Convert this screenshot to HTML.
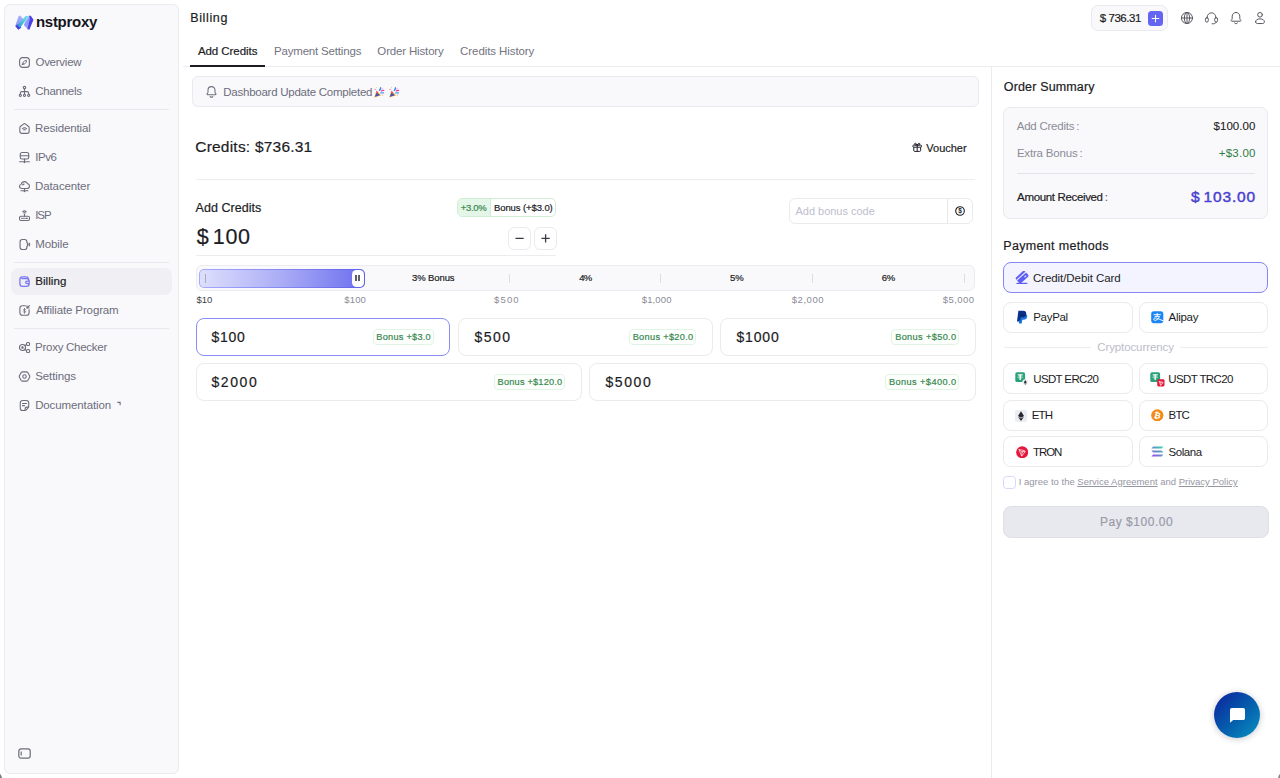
<!DOCTYPE html>
<html lang="en">
<head>
<meta charset="utf-8">
<title>Billing - Nstproxy</title>
<style>
*{box-sizing:border-box;margin:0;padding:0}
html,body{width:1280px;height:778px;overflow:hidden;background:#fff}
body{font-family:"Liberation Sans",sans-serif;color:#1c1c24;position:relative;font-size:12px}
.abs{position:absolute}
.t{position:absolute;white-space:nowrap;line-height:1}
.m{-webkit-text-stroke:0.2px currentColor}
/* sidebar */
#side{position:absolute;left:4px;top:4px;width:175px;height:770px;background:#f9f9fb;border:1px solid #eaeaef;border-radius:6px}
.nav{position:absolute;left:35px;font-size:11.5px;letter-spacing:-0.15px;color:#6d6d7c;white-space:nowrap;line-height:14px}
.nav.act{color:#1c1c24}
.ico{position:absolute;left:17.900px;width:13px;height:13px}
.ico svg{display:block;width:13px;height:13px;fill:none;stroke:#6d6d7c;stroke-width:2.050;stroke-linecap:round;stroke-linejoin:round}
.sdiv{position:absolute;left:14px;width:155px;height:1px;background:#e7e7ec}
/* main */
.hline{position:absolute;height:1px;background:#ededf1}
.box{position:absolute;border:1px solid #eaeaef;border-radius:8px;background:#fff}
.bbox{position:absolute;border:1px solid #e2f4e5;border-radius:4px;height:16px;background:#fdfffd}
.btx{font-size:9.200px;line-height:12px;color:#37874f;-webkit-text-stroke:0.2px #37874f}
.amt{position:absolute;font-size:15px;line-height:18px;color:#1c1c24;white-space:nowrap}
.pm{position:absolute;border:1px solid #eaeaef;border-radius:8px;background:#fff;height:31px}
.pm span{position:absolute;left:29px;top:8px;font-size:11.500px;line-height:14px;color:#1c1c24;white-space:nowrap}
.pm svg{position:absolute;left:11px;top:8px;width:13px;height:13px}
</style>
</head>
<body>

<!-- ============ SIDEBAR ============ -->
<div id="side"></div>

<!-- logo -->
<svg class="abs" style="left:15px;top:15.300px" width="19" height="16" viewBox="0 0 19 16">
  <defs>
    <linearGradient id="lg1" x1="1" y1="0" x2="0" y2="1"><stop offset="0" stop-color="#86e6ea"/><stop offset="0.55" stop-color="#4cc3df"/><stop offset="1" stop-color="#2b86d6"/></linearGradient>
    <linearGradient id="lg2" x1="0" y1="0" x2="0" y2="1"><stop offset="0" stop-color="#a9b3fb"/><stop offset="1" stop-color="#7f8df6"/></linearGradient>
  </defs>
  <path d="M3.600 1L5.200 .6L8.600 4.600L3.400 14.600L.3 11z" fill="url(#lg2)"/>
  <path d="M.3 11L3.400 14.700L6.400 12.600L2.800 9.300z" fill="#3f3ce0"/>
  <path d="M10.600 .9L14.400 .7L5 12.700L2.200 10.400z" fill="url(#lg1)"/>
  <path d="M10.600 6.200L14.200 1.200L14.900 3.600L12.900 14.300L8.800 9.900z" fill="#8f9cff"/>
  <path d="M14 .8L15.800 .8L18.500 4.800L14.300 14.700L12.500 14.200L14.700 3.800z" fill="#4b41e8"/>
</svg>
<div class="t" id="logo" style="left:36.00px;top:13px;font-size:15px;font-weight:bold;color:#15151c;letter-spacing:-0.293px;line-height:18px">nstproxy</div>

<!-- nav -->
<div class="ico" style="top:55.8px"><svg viewBox="0 0 24 24"><rect x="3" y="3" width="18" height="18" rx="5.500"/><path d="M8.200 15.800c-.6-3.800 3.600-8 7.600-7.600c.4 4-3.800 8.200-7.600 7.600z" stroke-width="1.700"/><path d="M7.400 16.600l3-3" stroke-width="1.500"/></svg></div>
<div id="n-overview" class="nav" style="top:55px;letter-spacing:-0.256px;left:35.44px">Overview</div>
<div class="ico" style="top:84.8px"><svg viewBox="0 0 24 24"><circle cx="12" cy="4.800" r="2.300"/><path d="M12 7.200v9M4.300 16.500v-1.500c0-1.800 1-2.800 2.800-2.800h9.800c1.800 0 2.800 1 2.800 2.800v1.500"/><circle cx="4.300" cy="19" r="2"/><circle cx="12" cy="19" r="2"/><circle cx="19.700" cy="19" r="2"/></svg></div>
<div id="n-channels" class="nav" style="top:84px;letter-spacing:-0.285px;left:35.34px">Channels</div>
<div class="ico" style="top:121.8px"><svg viewBox="0 0 24 24"><path d="M10.600 3.500c.9-.7 1.900-.7 2.800 0l6.200 4.700c.7.500 1 1.200 1 2v6.800c0 2.500-1.500 4-4 4H7.400c-2.500 0-4-1.500-4-4v-6.800c0-.8.300-1.500 1-2z"/><path d="M8.300 12.300c2.200-2 5.200-2 7.400 0M10.400 14.600c1-.8 2.200-.8 3.200 0"/></svg></div>
<div id="n-residential" class="nav" style="top:121px;letter-spacing:-0.116px;left:35.12px">Residential</div>
<div class="ico" style="top:150.8px"><svg viewBox="0 0 24 24"><rect x="4.200" y="2.800" width="15.600" height="12" rx="3.200"/><path d="M4.200 8.800h15.600M12 14.800v4M3 19.800h18M10.300 19.800l1.700 1.700l1.700-1.700"/></svg></div>
<div id="n-ipv6" class="nav" style="top:150px;letter-spacing:-0.383px;left:35.14px">IPv6</div>
<div class="ico" style="top:179.8px"><svg viewBox="0 0 24 24"><path d="M7.300 15.800c-2.600 0-4.500-1.800-4.500-4.100c0-2 1.400-3.600 3.300-4C6.800 4.900 9.100 3 11.900 3c2.500 0 4.600 1.500 5.500 3.700c2.200.3 3.800 2.100 3.800 4.400c0 2.600-2 4.700-4.600 4.700z"/><path d="M8.500 9.200c.5-1 1.500-1.600 2.700-1.600M12 15.800v3.700M5.500 19.800h13M10.300 19.800l1.700 1.700l1.700-1.700"/></svg></div>
<div id="n-datacenter" class="nav" style="top:179px;letter-spacing:-0.128px;left:35.12px">Datacenter</div>
<div class="ico" style="top:208.8px"><svg viewBox="0 0 24 24"><rect x="2.800" y="13.500" width="18.400" height="7.700" rx="2.600"/><path d="M12 13.500V9.200M6.800 17.400h1M10.500 17.400h1M14.300 17.400h3"/><path d="M8.800 5c1.900-1.700 4.500-1.700 6.400 0M10.500 7.200c.9-.8 2.100-.8 3 0"/></svg></div>
<div id="n-isp" class="nav" style="top:208px;letter-spacing:-0.965px;left:35.14px">ISP</div>
<div class="ico" style="top:237.8px"><svg viewBox="0 0 24 24"><path d="M16.500 8.500V7c0-2.800-1.400-4.200-4.200-4.200H8c-2.800 0-4.200 1.400-4.200 4.200v10c0 2.800 1.400 4.200 4.200 4.200h4.300c2.800 0 4.200-1.400 4.200-4.200v-1.500"/><path d="M16.500 8.500c1.600.5 2.700 1.800 2.700 3.500s-1.100 3-2.700 3.500" fill="#6d6d7c" stroke-width="1"/><path d="M21 9.500c.8 1.600.8 3.400 0 5"/></svg></div>
<div id="n-mobile" class="nav" style="top:237px;letter-spacing:-0.070px;left:35.18px">Mobile</div>
<div class="abs" style="left:11px;top:267.5px;width:161px;height:27px;border-radius:8px;background:#efeff4"></div>
<div class="ico" style="top:274.8px"><svg viewBox="0 0 24 24" style="stroke:#7a77f0;stroke-width:2.300"><path d="M3.500 8c0-3 1.700-4.700 4.700-4.700h6.600c2.500 0 4 1.200 4.400 3.500M3.500 8v8.300c0 3 1.700 4.700 4.700 4.700h7.600c3 0 4.700-1.700 4.700-4.700v-4.800c0-3-1.700-4.700-4.700-4.700H7"/><path d="M20.500 11.200h-3.800c-1.500 0-2.500 1-2.500 2.400s1 2.400 2.500 2.400h3.800"/></svg></div>
<div id="n-billing" class="nav act m" style="top:274px;letter-spacing:0.092px;left:35.13px">Billing</div>
<div class="ico" style="top:303.8px"><svg viewBox="0 0 24 24"><path d="M13.500 3.300H8.200c-3 0-4.700 1.700-4.700 4.700v8c0 3 1.700 4.700 4.700 4.700h7.600c3 0 4.700-1.700 4.700-4.700v-5.500"/><path d="M21 3l-4.500 4.500M16.500 3.500v4h4"/><path d="M12 8v9M14 10.500c-.4-.9-1.200-1.200-2-1.200c-1.200 0-2 .7-2 1.600c0 2.100 4.100 1.100 4.100 3.300c0 1-.9 1.600-2.100 1.600c-1 0-1.800-.4-2.200-1.300" stroke-width="1.400"/></svg></div>
<div id="n-affiliateprogram" class="nav" style="top:303px;letter-spacing:-0.125px;left:35.92px">Affiliate Program</div>
<div class="ico" style="top:340.8px"><svg viewBox="0 0 24 24"><circle cx="8.300" cy="12" r="5.600"/><circle cx="8.300" cy="12" r="1.300"/><rect x="15.800" y="2.800" width="5.600" height="5.600" rx="2"/><rect x="15.800" y="15.600" width="5.600" height="5.600" rx="2"/><path d="M12.500 8.200l3.300-2M12.500 15.800l3.300 2"/></svg></div>
<div id="n-proxychecker" class="nav" style="top:340px;letter-spacing:-0.272px;left:35.12px">Proxy Checker</div>
<div class="ico" style="top:369.8px"><svg viewBox="0 0 24 24"><path d="M8.300 3.400h7.400c1 0 1.800.5 2.300 1.300l3.400 5.900c.5.900.5 1.900 0 2.800l-3.400 5.900c-.5.800-1.300 1.300-2.300 1.300H8.300c-1 0-1.800-.5-2.300-1.300l-3.400-5.900c-.5-.9-.5-1.900 0-2.800L6 4.700c.5-.8 1.300-1.300 2.300-1.300z"/><circle cx="12" cy="12" r="3.200"/></svg></div>
<div id="n-settings" class="nav" style="top:369px;letter-spacing:-0.121px;left:35.31px">Settings</div>
<div class="ico" style="top:398.8px"><svg viewBox="0 0 24 24"><path d="M8.500 2.800h7c2.800 0 4.300 1.500 4.300 4.300v6.700c0 .9-.3 1.600-.9 2.300l-3.600 4c-.6.700-1.400 1.100-2.400 1.100H8.500c-2.800 0-4.300-1.500-4.300-4.300V7.100c0-2.800 1.500-4.300 4.300-4.300z"/><path d="M8.300 8.300h7.400M8.300 12.300h3.700M13 20.800v-2.300c0-2.200 1.200-3.400 3.400-3.400h3"/></svg></div>
<div id="n-documentation" class="nav" style="top:398px;letter-spacing:-0.108px;left:35.13px">Documentation</div>
<div class="sdiv" style="top:109px"></div>
<div class="sdiv" style="top:262px"></div>
<div class="sdiv" style="top:328px"></div>
<svg class="abs" style="left:115.500px;top:400.800px" width="5.500" height="5.500" viewBox="0 0 6 6" fill="none" stroke="#6d6d7c" stroke-width="1.200"><path d="M1.500 1.500h3v3"/></svg>
<svg class="abs" style="left:18px;top:748px" width="13" height="11" viewBox="0 0 13 11" fill="none" stroke="#6d6d7c" stroke-width="1.200"><rect x=".8" y=".8" width="11.400" height="9.400" rx="2.200"/><path d="M3.200 3.500v4"/></svg>
<!-- /nav -->

<!-- ============ HEADER ============ -->
<div class="t m" id="h-title" style="left:190.17px;top:11px;font-size:12.5px;line-height:15px;color:#1c1c24;letter-spacing:0.640px">Billing</div>

<!-- balance pill -->
<div class="abs" style="left:1091px;top:5px;width:77px;height:26px;border:1px solid #e9e9ee;border-radius:7px;background:#f9f9fb"></div>
<div class="t m" id="h-bal" style="left:1099.86px;top:11px;font-size:11.5px;line-height:14px;color:#1c1c24;letter-spacing:-0.473px">$ 736.31</div>
<div class="abs" style="left:1148px;top:11px;width:15px;height:15px;border-radius:3.500px;background:#6466f1"></div>
<svg class="abs" style="left:1148px;top:11px" width="15" height="15" viewBox="0 0 15 15" fill="none" stroke="#fff" stroke-width="1.1" stroke-linecap="round"><path d="M7.500 4.200v6.600M4.200 7.500h6.600"/></svg>

<!-- header icons -->
<svg class="abs" style="left:1180px;top:11px" width="14" height="14" viewBox="0 0 24 24" fill="none" stroke="#55555f" stroke-width="1.700" stroke-linecap="round"><circle cx="12" cy="12" r="9.500"/><path d="M2.500 12h19M12 2.500v19"/><ellipse cx="12" cy="12" rx="4.500" ry="9.500"/></svg>
<svg class="abs" style="left:1204px;top:11px" width="15" height="14" viewBox="0 0 26 24" fill="none" stroke="#55555f" stroke-width="1.700" stroke-linecap="round" stroke-linejoin="round"><path d="M5.500 11.500V11c0-4.500 3.300-8 7.500-8s7.500 3.500 7.500 8v.5"/><rect x="2.500" y="11.500" width="5" height="7.500" rx="2.400"/><rect x="18.500" y="11.500" width="5" height="7.500" rx="2.400"/><path d="M21 19c0 2-2 3-5 3h-2"/></svg>
<svg class="abs" style="left:1229px;top:11px" width="14" height="14" viewBox="0 0 24 24" fill="none" stroke="#55555f" stroke-width="1.700" stroke-linecap="round" stroke-linejoin="round"><path d="M12 2.500c-3.900 0-6.500 2.900-6.500 6.500v3.500c0 1.200-.6 2.300-1.500 3.200c-.7.700-.2 1.800.8 1.800h14.400c1 0 1.500-1.100.8-1.800c-.9-.9-1.500-2-1.500-3.200V9c0-3.600-2.600-6.500-6.500-6.500z"/><path d="M9.500 20.500c.6.800 1.500 1.200 2.500 1.200s1.900-.4 2.500-1.200"/></svg>
<svg class="abs" style="left:1253px;top:11px" width="14" height="14" viewBox="0 0 24 24" fill="none" stroke="#55555f" stroke-width="1.700" stroke-linecap="round" stroke-linejoin="round"><circle cx="12" cy="6.500" r="4"/><path d="M4.500 18.500c0-3 3-5 7.500-5s7.500 2 7.500 5c0 1.800-1 3-3 3h-9c-2 0-3-1.200-3-3z"/></svg>

<!-- ============ TABS ============ -->
<div class="hline" style="left:183px;top:66px;width:1097px;background:#ececf0"></div>
<div class="abs" style="left:190px;top:65px;width:75px;height:2px;background:#1c1c24"></div>
<div class="t m" id="tab1" style="left:197.88px;top:44px;font-size:11.5px;line-height:14px;color:#1c1c24;letter-spacing:-0.050px">Add Credits</div>
<div class="t" id="tab2" style="left:273.98px;top:44px;font-size:11.5px;line-height:14px;color:#73737f;letter-spacing:-0.180px">Payment Settings</div>
<div class="t" id="tab3" style="left:377.37px;top:44px;font-size:11.5px;line-height:14px;color:#73737f;letter-spacing:-0.163px">Order History</div>
<div class="t" id="tab4" style="left:460.12px;top:44px;font-size:11.5px;line-height:14px;color:#73737f;letter-spacing:-0.087px">Credits History</div>

<!-- vertical divider -->
<div class="abs" style="left:991px;top:67px;width:1px;height:711px;background:#ececf0"></div>

<!-- ============ NOTICE ============ -->
<div class="abs" style="left:192px;top:76px;width:787px;height:31px;border:1px solid #e9e9ee;border-radius:6px;background:#f9f9fb"></div>
<svg class="abs" style="left:204.500px;top:85px" width="13" height="14" viewBox="0 0 24 26" fill="none" stroke="#6d6d7c" stroke-width="1.900" stroke-linecap="round" stroke-linejoin="round"><path d="M12 3c-3.900 0-6.500 2.900-6.500 6.500V13c0 1.200-.6 2.300-1.500 3.200c-.7.700-.2 1.800.8 1.800h14.400c1 0 1.500-1.100.8-1.800c-.9-.9-1.500-2-1.500-3.200V9.500C18.500 5.900 15.900 3 12 3z"/><path d="M9.500 21.500c.6.800 1.500 1.200 2.500 1.200s1.900-.4 2.500-1.200"/></svg>
<div class="t" id="notice" style="left:223.30px;top:85px;font-size:11.5px;line-height:14px;color:#6d6d7c;letter-spacing:-0.248px">Dashboard Update Completed</div>
<svg class="abs" style="left:373.800px;top:86.500px" width="26" height="11" viewBox="0 0 26 11">
  <g><path d="M.3 10.400L2.500 3.800L7.100 8.200z" fill="#f0a020"/><path d="M.9 9.800L2.700 5.400L5.900 8.200z" fill="#3f51c4"/><path d="M2.300 3.500L4.200 5.300L2.900 6.700z" fill="#f0457a"/><path d="M5 3.700C6.300 2.800 6.700 1.600 6.600.3" stroke="#2a8fe8" stroke-width="1.300" fill="none"/><path d="M7 4.200C8 3.300 9.200 3.100 10.300 3.500" stroke="#f03fa8" stroke-width="1.200" fill="none"/><path d="M6.300 5.900h3.800" stroke="#3a9ff0" stroke-width="1.200" fill="none"/><rect x=".3" y="1.900" width="1.800" height="1.100" fill="#f49ad0"/><circle cx="2.700" cy=".6" r=".6" fill="#f0d060"/><circle cx="8.600" cy="8" r=".6" fill="#f2a53a"/><circle cx="8" cy="1.800" r=".5" fill="#f03fa8"/></g>
  <g transform="translate(14.900 0)"><path d="M.3 10.400L2.500 3.800L7.100 8.200z" fill="#f0a020"/><path d="M.9 9.800L2.700 5.400L5.900 8.200z" fill="#3f51c4"/><path d="M2.300 3.500L4.200 5.300L2.900 6.700z" fill="#f0457a"/><path d="M5 3.700C6.300 2.800 6.700 1.600 6.600.3" stroke="#2a8fe8" stroke-width="1.300" fill="none"/><path d="M7 4.200C8 3.300 9.200 3.100 10.300 3.500" stroke="#f03fa8" stroke-width="1.200" fill="none"/><path d="M6.300 5.900h3.800" stroke="#3a9ff0" stroke-width="1.200" fill="none"/><rect x=".3" y="1.900" width="1.800" height="1.100" fill="#f49ad0"/><circle cx="2.700" cy=".6" r=".6" fill="#f0d060"/><circle cx="8.600" cy="8" r=".6" fill="#f2a53a"/><circle cx="8" cy="1.800" r=".5" fill="#f03fa8"/></g>
</svg>

<!-- ============ CREDITS ============ -->
<div class="t m" id="credits" style="left:195.25px;top:137px;font-size:15.5px;line-height:20px;color:#1c1c24;letter-spacing:0.216px">Credits: $736.31</div>
<svg class="abs" style="left:912.300px;top:142.400px" width="10.400" height="10.400" viewBox="0 0 20 20" fill="none" stroke="#1c1c24" stroke-width="1.900" stroke-linejoin="round"><rect x="1.800" y="6" width="16.400" height="4" rx="1"/><path d="M3.400 10v6.300c0 1.100.7 1.800 1.800 1.800h9.600c1.100 0 1.800-.7 1.800-1.800V10M10 6v12"/><path d="M10 6C8.700 2.200 5.300 1.600 4.900 3.700C4.600 5.300 6.800 6 10 6zM10 6c1.300-3.800 4.700-4.400 5.100-2.300C15.400 5.300 13.200 6 10 6z"/></svg>
<div class="t m" id="voucher" style="left:926.29px;top:141px;font-size:11px;line-height:14px;color:#1c1c24;letter-spacing:0.002px">Voucher</div>
<div class="hline" style="left:196px;top:179px;width:779px"></div>

<!-- ============ ADD CREDITS ============ -->
<div class="t m" id="addc" style="left:195.58px;top:201px;font-size:12.5px;line-height:15px;color:#1c1c24;letter-spacing:0.047px">Add Credits</div>
<div class="t m" id="big" style="left:196.64px;top:223px;font-size:21.5px;line-height:28px;color:#1c1c24;letter-spacing:0.632px;word-spacing:-3px">$ 100</div>

<!-- bonus tag -->
<div class="abs" style="left:457px;top:198px;width:99px;height:19px;border:1px solid #cfeed4;border-radius:5px;background:#fff;overflow:hidden"><div style="width:33px;height:17px;background:#e4f6e7;border-right:1px solid #cfeed4"></div></div>
<div class="t m" id="bt1" style="left:460.86px;top:201px;font-size:9.500px;line-height:14px;color:#37874f;letter-spacing:-0.324px">+3.0%</div>
<div class="t m" id="bt2" style="left:493.97px;top:201px;font-size:9.500px;line-height:14px;color:#1c1c24;letter-spacing:-0.095px">Bonus (+$3.0)</div>

<!-- minus / plus -->
<div class="box" style="left:508px;top:227px;width:23px;height:23px;border-radius:6px"></div>
<div class="box" style="left:534px;top:227px;width:23px;height:23px;border-radius:6px"></div>
<svg class="abs" style="left:508px;top:227px" width="49" height="23" viewBox="0 0 49 23" fill="none" stroke="#3a3a44" stroke-width="1.300"><path d="M7.500 11.400h8.200M33.500 11.400h8.200M37.600 7.300v8.200"/></svg>
<div class="hline" style="left:196px;top:255px;width:360px"></div>

<!-- bonus code input -->
<div class="box" style="left:789px;top:198px;width:184px;height:26px;border-radius:6px"></div>
<div class="abs" style="left:947px;top:199px;width:1px;height:24px;background:#e7e7ec"></div>
<div class="t" id="bcode" style="left:795.51px;top:204px;font-size:11px;line-height:14px;color:#bebece;letter-spacing:-0.018px">Add bonus code</div>
<svg class="abs" style="left:955px;top:206px" width="10" height="10" viewBox="0 0 20 20"><circle cx="10" cy="10" r="8.600" fill="none" stroke="#1c1c24" stroke-width="2.200"/><text x="10" y="14.500" font-family="Liberation Sans, sans-serif" font-size="13" font-weight="bold" text-anchor="middle" fill="#1c1c24">$</text></svg>

<!-- slider -->
<div class="abs" style="left:196px;top:265px;width:779px;height:26px;border:1px solid #ebebf0;border-radius:6px;background:#f9f9fb"></div>
<div class="abs" style="left:199px;top:269px;width:166px;height:18.500px;border-radius:5px;background:linear-gradient(90deg,#a6a9fb 0%,#8588f3 50%,#5d61e6 100%)"></div><div class="abs" style="left:200px;top:270px;width:164px;height:16.500px;border-radius:4px;background:linear-gradient(90deg,#dedffc 0%,#aaacf6 50%,#6c6fee 100%)"></div>
<div class="abs" style="left:205px;top:274px;width:1px;height:9px;background:#a9a9c8"></div>
<div class="abs" style="left:351.700px;top:270px;width:12.400px;height:16.500px;border-radius:4.500px;background:#fff"></div>
<div class="abs" style="left:355px;top:275px;width:1.700px;height:5.800px;background:#5f5f6a"></div>
<div class="abs" style="left:358.400px;top:275px;width:1.700px;height:5.800px;background:#5f5f6a"></div>
<div class="abs" style="left:509px;top:274px;width:1px;height:9px;background:#dcdce3"></div>
<div class="abs" style="left:660px;top:274px;width:1px;height:9px;background:#dcdce3"></div>
<div class="abs" style="left:812px;top:274px;width:1px;height:9px;background:#dcdce3"></div>
<div class="abs" style="left:964px;top:274px;width:1px;height:9px;background:#dcdce3"></div>
<div class="t m" id="s3" style="left:412.12px;top:272px;font-size:9.5px;line-height:12px;color:#1c1c24;letter-spacing:-0.126px">3% Bonus</div>
<div class="t m" id="s4" style="left:579.21px;top:272px;font-size:9.5px;line-height:12px;color:#1c1c24;letter-spacing:-0.850px">4%</div>
<div class="t m" id="s5" style="left:730.11px;top:272px;font-size:9.5px;line-height:12px;color:#1c1c24;letter-spacing:-0.068px">5%</div>
<div class="t m" id="s6" style="left:881.84px;top:272px;font-size:9.5px;line-height:12px;color:#1c1c24;letter-spacing:-0.426px">6%</div>

<div class="t" id="l10" style="left:196.53px;top:294px;font-size:9.500px;line-height:12px;color:#3f3f4a;letter-spacing:0.005px">$10</div>
<div class="t" id="l100" style="left:344.33px;top:294px;font-size:9.500px;line-height:12px;color:#8b8b97;letter-spacing:0.119px">$100</div>
<div class="t" id="l500" style="left:494.10px;top:294px;font-size:9.500px;line-height:12px;color:#8b8b97;letter-spacing:1.123px">$500</div>
<div class="t" id="l1000" style="left:641.74px;top:294px;font-size:9.500px;line-height:12px;color:#8b8b97;letter-spacing:0.139px">$1,000</div>
<div class="t" id="l2000" style="left:791.76px;top:294px;font-size:9.500px;line-height:12px;color:#8b8b97;letter-spacing:0.545px">$2,000</div>
<div class="t" id="l5000" style="left:942.76px;top:294px;font-size:9.500px;line-height:12px;color:#8b8b97;letter-spacing:0.446px">$5,000</div>

<!-- amount cards -->
<div class="box" style="left:196px;top:318px;width:254px;height:38px;border-color:#8a8df5"></div>
<div class="box" style="left:458px;top:318px;width:255px;height:38px"></div>
<div class="box" style="left:720px;top:318px;width:256px;height:38px"></div>
<div class="box" style="left:196px;top:363px;width:386px;height:38px"></div>
<div class="box" style="left:589px;top:363px;width:387px;height:38px"></div>
<div class="amt m" id="a100" style="font-size:14px;left:211.45px;top:328px;letter-spacing:0.718px">$100</div>
<div class="amt m" id="a500" style="font-size:14px;left:474.48px;top:328px;letter-spacing:1.505px">$500</div>
<div class="amt m" id="a1000" style="font-size:14px;left:736.45px;top:328px;letter-spacing:0.844px">$1000</div>
<div class="amt m" id="a2000" style="font-size:14px;left:211.45px;top:373px;letter-spacing:1.580px">$2000</div>
<div class="amt m" id="a5000" style="font-size:14px;left:605.45px;top:373px;letter-spacing:1.588px">$5000</div>
<div class="bbox" style="left:373px;top:329px;width:61px"></div><div class="t btx" id="b1" style="left:376.30px;top:331px;letter-spacing:0.254px">Bonus +$3.0</div>
<div class="bbox" style="left:629px;top:329px;width:67px"></div><div class="t btx" id="b2" style="left:632.67px;top:331px;letter-spacing:0.328px">Bonus +$20.0</div>
<div class="bbox" style="left:891px;top:329px;width:68px"></div><div class="t btx" id="b3" style="left:895.15px;top:331px;letter-spacing:0.367px">Bonus +$50.0</div>
<div class="bbox" style="left:494px;top:374px;width:71px"></div><div class="t btx" id="b4" style="left:497.60px;top:376px;letter-spacing:0.211px">Bonus +$120.0</div>
<div class="bbox" style="left:885px;top:374px;width:74px"></div><div class="t btx" id="b5" style="left:888.89px;top:376px;letter-spacing:0.430px">Bonus +$400.0</div>


<!-- ============ ORDER SUMMARY ============ -->
<div class="t m" id="os" style="left:1003.80px;top:79px;font-size:12.5px;line-height:16px;color:#1c1c24;letter-spacing:0.153px">Order Summary</div>
<div class="abs" style="left:1003px;top:107px;width:265px;height:112px;border:1px solid #e9e9ee;border-radius:7px;background:#f9f9fb"></div>
<div class="t" id="os1" style="left:1016.73px;top:119px;font-size:11.500px;line-height:14px;color:#8b8b97;letter-spacing:-0.232px">Add Credits<span style="margin-left:2px">:</span></div>
<div class="t" id="os1v" style="-webkit-text-stroke:0.100px #1c1c24;right:24.64px;top:119px;font-size:11.500px;line-height:14px;color:#1c1c24;letter-spacing:0.030px">$100.00</div>
<div class="t" id="os2" style="left:1016.89px;top:146px;font-size:11.500px;line-height:14px;color:#8b8b97;letter-spacing:-0.180px">Extra Bonus<span style="margin-left:2px">:</span></div>
<div class="t" id="os2v" style="right:24.27px;top:146px;font-size:11.500px;line-height:14px;color:#2f7d46;letter-spacing:0.259px">+$3.00</div>
<div class="hline" style="left:1017px;top:173px;width:238px;background:#e4e4ea"></div>
<div class="t m" id="os3" style="left:1017.12px;top:190px;font-size:11.500px;line-height:14px;color:#1c1c24;letter-spacing:-0.348px">Amount Received<span style="margin-left:2px;color:#6d6d7c">:</span></div>
<div class="t" id="os3v" style="-webkit-text-stroke:0.450px #4a3fd0;right:24.15px;top:186px;font-size:15.5px;line-height:22px;color:#4a3fd0;letter-spacing:0.806px;word-spacing:-2px">$ 103.00</div>

<!-- ============ PAYMENT METHODS ============ -->
<div class="t m" id="pmh" style="left:1003.31px;top:238px;font-size:12.5px;line-height:16px;color:#1c1c24;letter-spacing:0.322px">Payment methods</div>

<div class="pm" style="left:1003px;top:262px;width:265px;border-color:#8486f3;background:#f3f4ff"><span id="p-creditdebitcard" style="letter-spacing:-0.060px;left:28.89px">Credit/Debit Card</span></div>
<div class="pm" style="left:1003px;top:302px;width:130px"><span id="p-paypal" style="top:7px;letter-spacing:-0.312px;left:29.28px">PayPal</span></div>
<div class="pm" style="left:1139px;top:302px;width:129px"><span id="p-alipay" style="top:7px;letter-spacing:-0.294px;left:28.57px">Alipay</span></div>

<div class="hline" style="left:1004px;top:347px;width:87px;background:#ececf0"></div>
<div class="hline" style="left:1180px;top:347px;width:88px;background:#ececf0"></div>
<div class="t" id="crypto" style="left:1097.19px;top:340px;font-size:11.500px;line-height:14px;color:#bcbcc8;letter-spacing:-0.098px">Cryptocurrency</div>

<div class="pm" style="left:1003px;top:363px;width:130px"><span id="p-usdterc20" style="letter-spacing:-0.638px;left:29.26px">USDT ERC20</span></div>
<div class="pm" style="left:1139px;top:363px;width:129px"><span id="p-usdttrc20" style="letter-spacing:-0.607px;left:28.36px">USDT TRC20</span></div>
<div class="pm" style="left:1003px;top:400px;width:130px"><span id="p-eth" style="top:7px;left:27.82px;letter-spacing:-0.858px">ETH</span></div>
<div class="pm" style="left:1139px;top:400px;width:129px"><span id="p-btc" style="top:7px;letter-spacing:-0.824px;left:28.55px">BTC</span></div>
<div class="pm" style="left:1003px;top:436px;width:130px"><span id="p-tron" style="letter-spacing:-1.114px;left:29.11px">TRON</span></div>
<div class="pm" style="left:1139px;top:436px;width:129px"><span id="p-solana" style="letter-spacing:-0.412px;left:28.43px">Solana</span></div>

<!-- payment icons -->
<svg class="abs" style="left:1015px;top:271px" width="14" height="14" viewBox="0 0 14 14"><g transform="rotate(-42 7 6)"><rect x="1" y="2.300" width="12" height="7.600" rx="1.700" fill="#5c5ff2"/><path d="M1 4.900h12" stroke="#f3f4ff" stroke-width="1.100"/><path d="M8.800 7.700h2.200" stroke="#f3f4ff" stroke-width="1"/></g><path d="M2 12.400h9.800" stroke="#5c5ff2" stroke-width="1.300" stroke-linecap="round"/></svg>
<svg class="abs" style="left:1016px;top:310px" width="12" height="14" viewBox="0 0 12 14"><path d="M2.400.8h4.800c2 0 3.300 1.100 3 3.100c-.3 2.200-1.800 3.300-3.900 3.300H4.700l-.7 4.300H1z" fill="#0b3087"/><path d="M4 4h4.600c1.900 0 2.900 1 2.600 2.800c-.3 2-1.700 3-3.600 3H6.300l-.6 3.600H2.800z" fill="#0f6fd6" opacity=".95"/><path d="M4 4h4.600c.7 0 1.300.1 1.700.4c-.4 1.900-1.800 2.800-3.800 2.800H4.700l-.5 3H3z" fill="#0a2a78"/></svg>
<svg class="abs" style="left:1151px;top:311px" width="12.500" height="12.500" viewBox="0 0 13 13"><rect x=".2" y=".2" width="12.600" height="12.600" rx="2.800" fill="#1b86f5"/><path d="M3.200 3.800h6.600M6.500 2.500v2.600M4.200 5.600h4.600c-.4 1.500-1.600 3.400-3.800 4c-1.400.4-2.200-.3-2.200-1.100c0-1 1.200-1.600 2.900-1.100c1.700.5 3.500 1.500 6.800 2.700" stroke="#fff" stroke-width="1" fill="none" stroke-linecap="round" stroke-linejoin="round"/></svg>

<!-- USDT ERC20 -->
<svg class="abs" style="left:1015px;top:372px" width="14" height="14" viewBox="0 0 14 14"><rect x=".3" y=".3" width="9.800" height="9.800" rx="1.600" fill="#2aa37a"/><path d="M2.800 2.900h4.800M5.200 2.900v5" stroke="#fff" stroke-width="1.300" fill="none"/><ellipse cx="5.200" cy="5.300" rx="2.600" ry=".7" fill="none" stroke="#fff" stroke-width=".5"/><circle cx="10.300" cy="10.300" r="3" fill="#f1f1f4"/><path d="M10.300 8l1.500 2.400l-1.500.9l-1.500-.9zM8.800 10.900l1.500.9l1.500-.9l-1.500 1.900z" fill="#2b2b33"/></svg>
<!-- USDT TRC20 -->
<svg class="abs" style="left:1150px;top:372px" width="15" height="15" viewBox="0 0 15 15"><rect x=".3" y=".3" width="9.800" height="9.800" rx="1.600" fill="#2aa37a"/><path d="M2.800 2.900h4.800M5.200 2.900v5" stroke="#fff" stroke-width="1.300" fill="none"/><ellipse cx="5.200" cy="5.300" rx="2.600" ry=".7" fill="none" stroke="#fff" stroke-width=".5"/><rect x="7.200" y="7.200" width="7.300" height="7.300" rx="1.400" fill="#e5173a"/><path d="M9 9.300l3.400.7l.8.700l-2.600 2.800zM9 9.300l1.800 1.400l2.300-.1M10.600 13.400l.2-2.700" stroke="#fff" stroke-width=".55" fill="none" stroke-linejoin="round"/></svg>
<!-- ETH -->
<svg class="abs" style="left:1015px;top:409.500px" width="12" height="12" viewBox="0 0 12 12"><rect width="12" height="12" rx="1.500" fill="#ecedf3"/><path d="M6 1.200l3 4.900L6 7.800L3 6.100z" fill="#26262e"/><path d="M3 6.800L6 8.500l3-1.700L6 11z" fill="#26262e"/></svg>
<!-- BTC -->
<svg class="abs" style="left:1151px;top:408.700px" width="12.600" height="12.600" viewBox="0 0 13 13"><circle cx="6.500" cy="6.500" r="6.300" fill="#f28a1a"/><text x="6.700" y="9.600" font-family="Liberation Sans, sans-serif" font-size="8.500" font-weight="bold" text-anchor="middle" fill="#fff" transform="rotate(12 6.500 6.500)">₿</text></svg>
<!-- TRON -->
<svg class="abs" style="left:1015.500px;top:445.800px" width="12.400" height="12.400" viewBox="0 0 13 13"><circle cx="6.500" cy="6.500" r="6.300" fill="#e5173a"/><path d="M3 3.700l5.500 1l1.300 1.100L6 10.600zM3 3.700l3.300 2.600l3.500-.5M6 10.600l.3-4.300M8.500 4.700L6.300 6.300" stroke="#fff" stroke-width=".7" fill="none" stroke-linejoin="round"/></svg>
<!-- Solana -->
<svg class="abs" style="left:1151px;top:446px" width="13" height="11" viewBox="0 0 13 11"><defs><linearGradient id="sol" x1="0" y1="1" x2="1" y2="0"><stop offset="0" stop-color="#a445f2"/><stop offset="1" stop-color="#2bd9a6"/></linearGradient></defs><path d="M2.200.6h10.200l-1.800 2H.4zM.4 4.500h10.200l1.800 2H2.200zM2.200 8.400h10.200l-1.800 2H.4z" fill="url(#sol)"/></svg>

<!-- agreement -->
<div class="abs" style="left:1003px;top:476px;width:13px;height:13px;border:1px solid #d6d9fa;border-radius:3.500px;background:#fff"></div>
<div class="t" id="agree" style="left:1018.76px;top:475px;font-size:9.500px;line-height:13px;color:#9696a3;letter-spacing:-0.003px">I agree to the <span style="text-decoration:underline">Service Agreement</span> and <span style="text-decoration:underline">Privacy Policy</span></div>

<!-- pay button -->
<div class="abs" style="left:1003px;top:506px;width:266px;height:32px;border:1px solid #dfe0e6;border-radius:8px;background:#e8e9ee"></div>
<div class="t m" id="pay" style="left:1099.97px;top:514px;font-size:12px;line-height:16px;color:#999baa;letter-spacing:0.533px">Pay $100.00</div>

<!-- chat bubble -->
<div class="abs" style="left:1214.300px;top:692.400px;width:46px;height:46px;border-radius:50%;background:linear-gradient(135deg,#0d1f9c 0%,#0560ad 55%,#0a93c2 100%);box-shadow:0 1px 7px rgba(0,0,0,.22)"></div>
<svg class="abs" style="left:1229px;top:707px" width="17" height="17" viewBox="0 0 17 17"><path d="M2.800 1h11.400c1 0 1.800.8 1.800 1.800v8.400c0 1-.8 1.800-1.800 1.800H4.200L1 15.800V2.800C1 1.800 1.800 1 2.800 1z" fill="#fff"/></svg>

<!-- window corner artefacts -->
<div class="abs" style="left:-14px;top:771px;width:16px;height:16px;border-radius:50%;background:#6d7f78"></div>
<div class="abs" style="left:1278px;top:771px;width:16px;height:16px;border-radius:50%;background:#8a8a8a"></div>


</body>
</html>
